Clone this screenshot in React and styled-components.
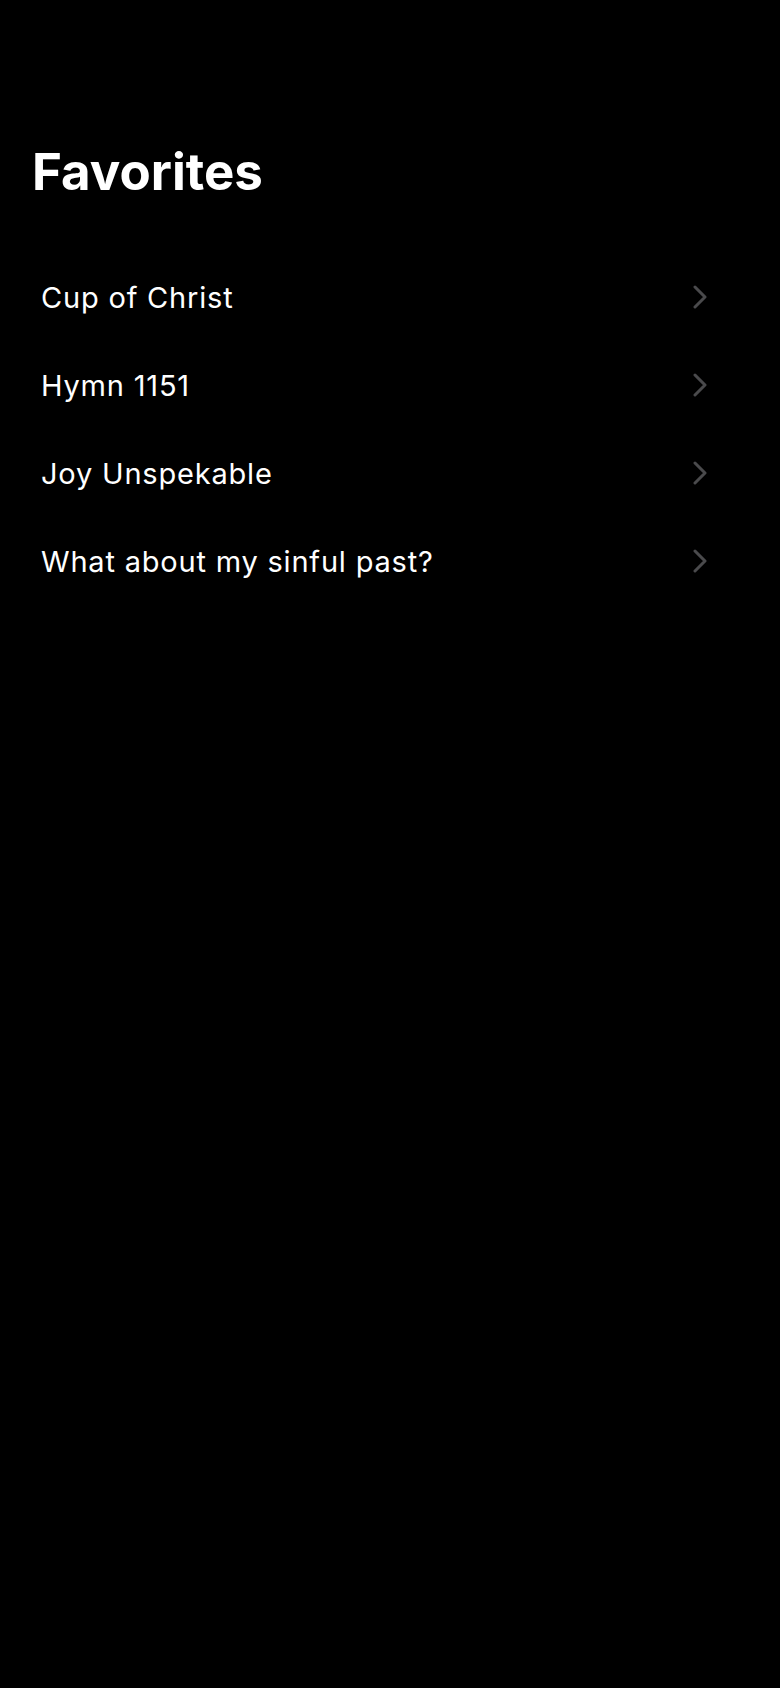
import React from 'react';
import styled, { createGlobalStyle } from 'styled-components';

const GlobalStyle = createGlobalStyle`
    html, body {
        margin: 0;
        padding: 0;
        background: #000;
    }
    body {
        font-family: Inter, "Noto Sans", "Liberation Sans", sans-serif;
        color: #fff;
    }
`;

const Screen = styled.div`
    min-height: 1688px;
    background: #000;
    padding-top: 142px;
    box-sizing: border-box;
`;

const Title = styled.h1`
    margin: 0 0 0 32px;
    font-size: 51px;
    font-weight: 700;
    line-height: 60px;
    letter-spacing: 0;
`;

const List = styled.ul`
    list-style: none;
    margin: 51px 0 0;
    padding: 0 73px 0 41px;
`;

const Row = styled.li`
    display: flex;
    align-items: center;
    justify-content: space-between;
    height: 88px;
    font-size: 29px;
    font-weight: 400;
    letter-spacing: 0.8px;
`;

const Chevron = () => (
    <svg width="14" height="24" viewBox="0 0 14 24" fill="none">
        <path d="M2 2 L12 12 L2 22" stroke="#4a4a4c" strokeWidth="3" strokeLinecap="round" strokeLinejoin="round" />
    </svg>
);

const songs = [
    'Cup of Christ',
    'Hymn 1151',
    'Joy Unspekable',
    'What about my sinful past?',
];

export default function App() {
    return (
        <Screen>
            <GlobalStyle />
            <Title>Favorites</Title>
            <List>
                {songs.map((s) => (
                    <Row key={s}>
                        <span>{s}</span>
                        <Chevron />
                    </Row>
                ))}
            </List>
        </Screen>
    );
}
